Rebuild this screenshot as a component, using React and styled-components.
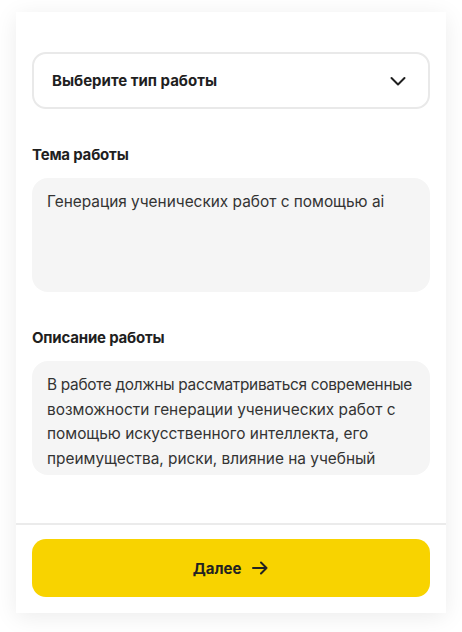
import React from 'react';
import styled, { createGlobalStyle } from 'styled-components';

const GlobalStyle = createGlobalStyle`
  * { box-sizing: border-box; }
  body {
    margin: 0;
    background: #ffffff;
    font-family: Inter, "Noto Sans", sans-serif;
    color: #1f1f1f;
  }
`;

const Page = styled.div`
  padding: 12px 16px 20px;
`;

const Card = styled.div`
  width: 430px;
  background: #fff;
  box-shadow: 0 4px 22px rgba(0, 0, 0, 0.08);
`;

const Body = styled.div`
  padding: 40px 16px 48px;
  display: flex;
  flex-direction: column;
`;

const Select = styled.button`
  width: 100%;
  height: 57px;
  border: 2px solid #e9e9e9;
  border-radius: 14px;
  background: #fff;
  padding: 0 20px 0 18px;
  display: flex;
  align-items: center;
  justify-content: space-between;
  font-family: inherit;
  font-size: 15px;
  font-weight: 700;
  color: #1f1f1f;
  cursor: pointer;
`;

const Label = styled.div`
  margin-top: 36px;
  margin-bottom: 13px;
  font-size: 15px;
  line-height: 20px;
  font-weight: 700;
  letter-spacing: -0.2px;
  color: #1f1f1f;
`;

const Field = styled.div`
  height: 114px;
  border-radius: 16px;
  background: #f5f5f5;
  padding: 12px 10px 12px 15px;
  font-size: 15.4px;
  line-height: 24.5px;
  color: #333;
  overflow: hidden;
`;

const Line = styled.div`
  white-space: nowrap;
  letter-spacing: ${(p) => p.$tight || 0}px;
`;

const Footer = styled.div`
  border-top: 2px solid #ebebeb;
  padding: 14px 16px 16px;
`;

const NextButton = styled.button`
  width: 100%;
  height: 58px;
  border: none;
  border-radius: 14px;
  background: #f8d300;
  display: flex;
  align-items: center;
  justify-content: center;
  gap: 10px;
  font-family: inherit;
  font-size: 15px;
  font-weight: 700;
  color: #222;
  cursor: pointer;
`;

const Chevron = () => (
  <svg width="20" height="20" viewBox="0 0 20 20" fill="none">
    <path d="M3.5 7L10 13.5L16.5 7" stroke="#1f1f1f" strokeWidth="2" strokeLinecap="round" strokeLinejoin="round" />
  </svg>
);

const Arrow = () => (
  <svg width="18" height="18" viewBox="0 0 18 18" fill="none">
    <path d="M2 9H15.5M10 3.5L15.5 9L10 14.5" stroke="#222" strokeWidth="2" strokeLinecap="round" strokeLinejoin="round" />
  </svg>
);

const description = [
  'В работе должны рассматриваться современные',
  'возможности генерации ученических работ с',
  'помощью искусственного интеллекта, его',
  'преимущества, риски, влияние на учебный',
];

export default function App() {
  return (
    <Page>
      <GlobalStyle />
      <Card>
        <Body>
          <Select>
            Выберите тип работы
            <Chevron />
          </Select>
          <Label>Тема работы</Label>
          <Field>Генерация ученических работ с помощью ai</Field>
          <Label>Описание работы</Label>
          <Field>
            {description.map((line) => (
              <Line key={line} $tight={line.length > 42 ? -0.3 : 0}>{line}</Line>
            ))}
          </Field>
        </Body>
        <Footer>
          <NextButton>
            Далее
            <Arrow />
          </NextButton>
        </Footer>
      </Card>
    </Page>
  );
}
